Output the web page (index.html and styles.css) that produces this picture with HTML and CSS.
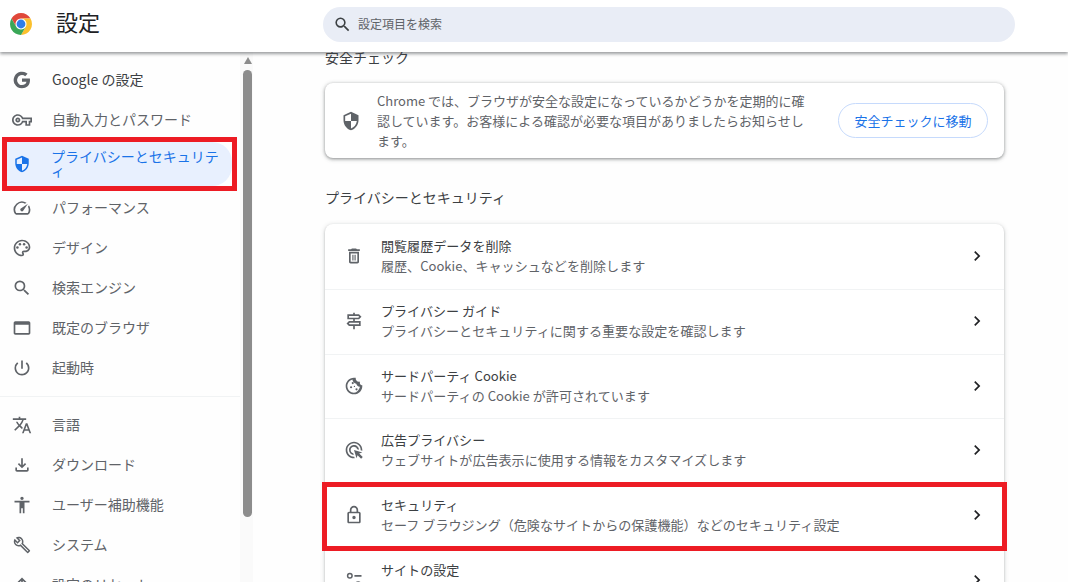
FILE: index.html
```html
<!DOCTYPE html>
<html lang="ja">
<head>
<meta charset="utf-8">
<title>設定</title>
<link rel="stylesheet" href="styles.css">
</head>
<body>
<div class="app">
  <header class="topbar">
    <div class="brand">
      <svg class="logo" viewBox="4 4 40 40"><path fill="#e0483a" d="M6.68 14A20 20 0 0 1 41.32 14H24A10 10 0 0 0 15.34 29Z"/><path fill="#fbc02d" d="M41.32 14A20 20 0 0 1 24 44L32.66 29A10 10 0 0 0 24 14Z"/><path fill="#3aa757" d="M24 44A20 20 0 0 1 6.68 14L15.34 29A10 10 0 0 0 32.66 29Z"/><circle cx="24" cy="24" r="8" fill="#2f7de8"/></svg>
      <h1 class="app-title">設定</h1>
    </div>
    <div class="search">
      <svg class="search-icon" viewBox="0 0 24 24"><path d="M15.5 14h-.79l-.28-.27A6.471 6.471 0 0 0 16 9.5 6.5 6.5 0 1 0 9.5 16c1.61 0 3.09-.59 4.23-1.57l.27.28v.79l5 4.99L20.49 19l-4.99-5zm-6 0C7.01 14 5 11.99 5 9.5S7.01 5 9.5 5 14 7.01 14 9.5 11.99 14 9.5 14z"/></svg>
      <span class="search-text">設定項目を検索</span>
    </div>
  </header>
  <div class="body">
    <nav class="sidebar">
      <ul class="nav-group">
        <li class="nav-item nav-strong"><svg class="nav-icon" viewBox="0 0 24 24"><path d="M21.6 12.2c0-.7-.1-1.4-.2-2H12v3.9h5.4a4.6 4.6 0 0 1-2 3v2.5h3.2c1.9-1.8 3-4.4 3-7.4z"/><path d="M12 22c2.7 0 5-.9 6.6-2.4l-3.2-2.5c-.9.6-2 1-3.4 1-2.6 0-4.8-1.8-5.6-4.1H3.1v2.6A10 10 0 0 0 12 22z"/><path d="M6.4 14a6 6 0 0 1 0-3.8V7.5H3.1a10 10 0 0 0 0 9z"/><path d="M12 6c1.5 0 2.8.5 3.8 1.5l2.9-2.9A10 10 0 0 0 3.1 7.5l3.3 2.6C7.2 7.8 9.4 6 12 6z"/></svg><span class="nav-label">Google の設定</span></li>
        <li class="nav-item"><svg class="nav-icon" viewBox="0 0 24 24"><path d="M22 19h-6v-4h-2.68c-1.14 2.42-3.6 4-6.32 4-3.86 0-7-3.14-7-7s3.14-7 7-7c2.72 0 5.17 1.58 6.32 4H24v6h-2v4zm-4-2h2v-4h2v-2H11.94l-.23-.67C11.01 8.34 9.11 7 7 7c-2.76 0-5 2.24-5 5s2.24 5 5 5c2.11 0 4.01-1.34 4.71-3.33l.23-.67H18v4zM7 15c-1.65 0-3-1.35-3-3s1.35-3 3-3 3 1.35 3 3-1.35 3-3 3zm0-4c-.55 0-1 .45-1 1s.45 1 1 1 1-.45 1-1-.45-1-1-1z"/></svg><span class="nav-label">自動入力とパスワード</span></li>
        <li class="nav-item nav-active"><svg class="nav-icon" viewBox="0 0 24 24"><path d="M12 1L3 5v6c0 5.55 3.84 10.74 9 12 5.16-1.26 9-6.45 9-12V5l-9-4zm0 10.99h7c-.53 4.12-3.28 7.79-7 8.94V12H5V6.3l7-3.11v8.8z"/></svg><span class="nav-label">プライバシーとセキュリティ</span></li>
        <li class="nav-item"><svg class="nav-icon" viewBox="0 0 24 24"><path d="M20.38 8.57l-1.23 1.85a8 8 0 0 1-.22 7.58H5.07A8 8 0 0 1 15.58 6.85l1.85-1.23A10 10 0 0 0 3.35 19a2 2 0 0 0 1.72 1h13.85a2 2 0 0 0 1.74-1 10 10 0 0 0-.27-10.44zm-9.79 6.84a2 2 0 0 0 2.83 0l5.66-8.49-8.49 5.66a2 2 0 0 0 0 2.83z"/></svg><span class="nav-label">パフォーマンス</span></li>
        <li class="nav-item"><svg class="nav-icon" viewBox="0 0 24 24"><path d="M12 22C6.49 22 2 17.51 2 12S6.49 2 12 2s10 4.04 10 9c0 3.31-2.69 6-6 6h-1.77c-.28 0-.5.22-.5.5 0 .12.05.23.13.33.41.47.64 1.06.64 1.67A2.5 2.5 0 0 1 12 22zm0-18c-4.41 0-8 3.59-8 8s3.59 8 8 8c.28 0 .5-.22.5-.5a.54.54 0 0 0-.14-.35c-.41-.46-.63-1.05-.63-1.65a2.5 2.5 0 0 1 2.5-2.5H16c2.21 0 4-1.79 4-4 0-3.86-3.59-7-8-7z"/><circle cx="6.5" cy="11.5" r="1.5"/><circle cx="9.5" cy="7.5" r="1.5"/><circle cx="14.5" cy="7.5" r="1.5"/><circle cx="17.5" cy="11.5" r="1.5"/></svg><span class="nav-label">デザイン</span></li>
        <li class="nav-item"><svg class="nav-icon" viewBox="0 0 24 24"><path d="M15.5 14h-.79l-.28-.27A6.471 6.471 0 0 0 16 9.5 6.5 6.5 0 1 0 9.5 16c1.61 0 3.09-.59 4.23-1.57l.27.28v.79l5 4.99L20.49 19l-4.99-5zm-6 0C7.01 14 5 11.99 5 9.5S7.01 5 9.5 5 14 7.01 14 9.5 11.99 14 9.5 14z"/></svg><span class="nav-label">検索エンジン</span></li>
        <li class="nav-item"><svg class="nav-icon" viewBox="0 0 24 24"><path d="M20 4H4c-1.1 0-2 .9-2 2v12c0 1.1.9 2 2 2h16c1.1 0 2-.9 2-2V6c0-1.1-.9-2-2-2zm0 14H4V8h16v10z"/></svg><span class="nav-label">既定のブラウザ</span></li>
        <li class="nav-item"><svg class="nav-icon" viewBox="0 0 24 24"><path d="M13 3h-2v10h2V3zm4.83 2.17l-1.42 1.42A6.92 6.92 0 0 1 19 12c0 3.87-3.13 7-7 7A6.995 6.995 0 0 1 7.58 6.58L6.17 5.17A8.932 8.932 0 0 0 3 12c0 4.97 4.03 9 9 9s9-4.03 9-9c0-2.74-1.23-5.18-3.17-6.83z"/></svg><span class="nav-label">起動時</span></li>
      </ul>
      <ul class="nav-group nav-group-rest">
        <li class="nav-item"><svg class="nav-icon" viewBox="0 0 24 24"><path d="M12.87 15.07l-2.54-2.51.03-.03A17.52 17.52 0 0 0 14.07 6H17V4h-7V2H8v2H1v1.99h11.17C11.5 7.92 10.44 9.75 9 11.35 8.07 10.32 7.3 9.19 6.69 8h-2c.73 1.63 1.73 3.17 2.98 4.56l-5.09 5.02L4 19l5-5 3.11 3.11.76-2.04zM18.5 10h-2L12 22h2l1.12-3h4.75L21 22h2l-4.5-12zm-2.62 7l1.62-4.33L19.12 17h-3.24z"/></svg><span class="nav-label">言語</span></li>
        <li class="nav-item"><svg class="nav-icon" viewBox="0 0 24 24"><path d="M18 15v3H6v-3H4v3c0 1.1.9 2 2 2h12c1.1 0 2-.9 2-2v-3h-2zm-1-4l-1.41-1.41L13 12.17V4h-2v8.17L8.41 9.59 7 11l5 5 5-5z"/></svg><span class="nav-label">ダウンロード</span></li>
        <li class="nav-item"><svg class="nav-icon" viewBox="0 0 24 24"><path d="M12 2c1.1 0 2 .9 2 2s-.9 2-2 2-2-.9-2-2 .9-2 2-2zm9 7h-6v13h-2v-6h-2v6H9V9H3V7h18v2z"/></svg><span class="nav-label">ユーザー補助機能</span></li>
        <li class="nav-item"><svg class="nav-icon nav-icon-small" viewBox="0 0 24 24"><path d="M22.61 18.99l-9.08-9.08c.93-2.34.45-5.1-1.44-7C9.79.61 6.21.4 3.66 2.25L7.5 6.1 6.08 7.51 2.25 3.69C.39 6.23.61 9.82 2.9 12.11c1.86 1.86 4.57 2.35 6.89 1.48l9.11 9.11c.39.39 1.02.39 1.41 0l2.3-2.3c.4-.38.4-1.02 0-1.41zm-3 1.6l-9.46-9.46c-.61.45-1.29.72-2 .82-1.36.2-2.79-.21-3.83-1.25C3.37 9.76 2.93 8.5 3 7.26l3.09 3.09 4.24-4.24-3.09-3.09c1.24-.07 2.49.37 3.44 1.31a4.469 4.469 0 0 1 1.24 3.96 4.35 4.35 0 0 1-.88 1.96l9.45 9.45-.88.89z"/></svg><span class="nav-label">システム</span></li>
        <li class="nav-item"><svg class="nav-icon" viewBox="0 0 24 24"><path d="M12 3l-6 6 1.4 1.4L11 6.8V15h2V6.8l3.6 3.6L18 9z"/></svg><span class="nav-label">設定のリセット</span></li>
      </ul>
    </nav>
    <div class="scrollbar">
      <div class="scroll-arrow"></div>
      <div class="scroll-thumb"></div>
    </div>
    <main class="main">
      <h2 class="section-title section-first">安全チェック</h2>
      <section class="card check-card">
        <svg class="row-icon" viewBox="0 0 24 24"><path d="M12 1L3 5v6c0 5.55 3.84 10.74 9 12 5.16-1.26 9-6.45 9-12V5l-9-4zm0 10.99h7c-.53 4.12-3.28 7.79-7 8.94V12H5V6.3l7-3.11v8.8z"/></svg>
        <p class="check-text">Chrome では、ブラウザが安全な設定になっているかどうかを定期的に確認しています。お客様による確認が必要な項目がありましたらお知らせします。</p>
        <button class="check-button">安全チェックに移動</button>
      </section>
      <h2 class="section-title">プライバシーとセキュリティ</h2>
      <section class="card list-card">
        <div class="row">
          <svg class="row-icon" viewBox="0 0 24 24"><path d="M16 9v10H8V9h8m-1.5-6h-5l-1 1H5v2h14V4h-3.5l-1-1zM18 7H6v12c0 1.1.9 2 2 2h8c1.1 0 2-.9 2-2V7z"/><path d="M10 10.500h1.400v7H10zM12.600 10.500H14v7h-1.400z"/></svg>
          <div class="row-text"><div class="row-label">閲覧履歴データを削除</div><div class="row-sub">履歴、Cookie、キャッシュなどを削除します</div></div>
          <svg class="chevron" viewBox="0 0 24 24"><path d="M10 6L8.59 7.41 13.17 12l-4.58 4.59L10 18l6-6z"/></svg>
        </div>
        <div class="row">
          <svg class="row-icon" viewBox="0 0 24 24"><path d="M13 10h5l3-3-3-3h-5V2h-2v2H4v6h7v2H6l-3 3 3 3h5v4h2v-4h7v-6h-7v-2zM6 6h11.170l1 1-1 1H6V6zm12 10H6.830l-1-1 1-1H18v2z"/></svg>
          <div class="row-text"><div class="row-label">プライバシー ガイド</div><div class="row-sub">プライバシーとセキュリティに関する重要な設定を確認します</div></div>
          <svg class="chevron" viewBox="0 0 24 24"><path d="M10 6L8.59 7.41 13.17 12l-4.58 4.59L10 18l6-6z"/></svg>
        </div>
        <div class="row">
          <svg class="row-icon" viewBox="0 0 24 24"><path d="M21.950 10.990c-1.790-.03-3.700-1.950-2.680-4.220-2.970 1-5.780-1.590-5.190-4.560C7.110.74 2 6.410 2 12c0 5.520 4.480 10 10 10 5.890 0 10.540-5.080 9.950-11.010zM12 20c-4.410 0-8-3.590-8-8 0-3.310 2.310-6.830 6.130-7.770.21 2.490 2.130 4.670 4.640 4.980.2 1.680 1.850 3.580 4.290 3.660C18.530 16.100 15.500 20 12 20z"/><circle cx="10.500" cy="8.500" r="1.300"/><circle cx="8.500" cy="13.500" r="1.300"/><circle cx="15" cy="16" r="1.300"/><circle cx="12.500" cy="12.500" r=".8"/></svg>
          <div class="row-text"><div class="row-label">サードパーティ Cookie</div><div class="row-sub">サードパーティの Cookie が許可されています</div></div>
          <svg class="chevron" viewBox="0 0 24 24"><path d="M10 6L8.59 7.41 13.17 12l-4.58 4.59L10 18l6-6z"/></svg>
        </div>
        <div class="row">
          <svg class="row-icon" viewBox="0 0 24 24"><path d="M11.71 17.99A5.993 5.993 0 0 1 6 12c0-3.31 2.69-6 6-6 3.22 0 5.84 2.53 5.99 5.71l-2.1-.63a3.999 3.999 0 1 0-4.81 4.81l.63 2.1zM22 12c0 .3-.01.6-.04.9l-1.97-.59c.01-.1.01-.21.01-.31 0-4.42-3.58-8-8-8s-8 3.58-8 8 3.58 8 8 8c.1 0 .21 0 .31-.01l.59 1.97c-.3.03-.6.04-.9.04-5.52 0-10-4.48-10-10S6.48 2 12 2s10 4.48 10 10zm-3.77 4.26L22 15l-10-3 3 10 1.26-3.77 4.27 4.27 1.98-1.98-4.28-4.26z"/></svg>
          <div class="row-text"><div class="row-label">広告プライバシー</div><div class="row-sub">ウェブサイトが広告表示に使用する情報をカスタマイズします</div></div>
          <svg class="chevron" viewBox="0 0 24 24"><path d="M10 6L8.59 7.41 13.17 12l-4.58 4.59L10 18l6-6z"/></svg>
        </div>
        <div class="row row-marked">
          <svg class="row-icon" viewBox="0 0 24 24"><path d="M18 8h-1V6c0-2.76-2.24-5-5-5S7 3.240 7 6v2H6c-1.100 0-2 .9-2 2v10c0 1.100.9 2 2 2h12c1.100 0 2-.9 2-2V10c0-1.100-.9-2-2-2zM9 6c0-1.660 1.340-3 3-3s3 1.340 3 3v2H9V6zm9 14H6V10h12v10zm-6-3c1.100 0 2-.9 2-2s-.9-2-2-2-2 .9-2 2 .9 2 2 2z"/></svg>
          <div class="row-text"><div class="row-label">セキュリティ</div><div class="row-sub">セーフ ブラウジング（危険なサイトからの保護機能）などのセキュリティ設定</div></div>
          <svg class="chevron" viewBox="0 0 24 24"><path d="M10 6L8.59 7.41 13.17 12l-4.58 4.59L10 18l6-6z"/></svg>
        </div>
        <div class="row">
          <svg class="row-icon" viewBox="0 0 24 24"><circle cx="7" cy="7" r="2.700" fill="none" stroke="currentColor" stroke-width="1.800"/><circle cx="17" cy="17" r="2.700" fill="none" stroke="currentColor" stroke-width="1.800"/><path d="M12.500 6h8.500v2h-8.500zM3 16h8.500v2H3z"/></svg>
          <div class="row-text"><div class="row-label">サイトの設定</div><div class="row-sub">サイトが使用、表示できる情報を管理します</div></div>
          <svg class="chevron" viewBox="0 0 24 24"><path d="M10 6L8.59 7.41 13.17 12l-4.58 4.59L10 18l6-6z"/></svg>
        </div>
      </section>
    </main>
  </div>
</div>
</body>
</html>
```
FILE: styles.css
```css
* { box-sizing: border-box; }
html, body { margin: 0; height: 100%; overflow: hidden; background: #fefefe; }
body { font-family: "Noto Sans CJK JP", Roboto, "Noto Sans", sans-serif; color: #3c4043; font-weight: 400; }
ul { list-style: none; margin: 0; padding: 0; }
.app { display: flex; flex-direction: column; height: 582px; overflow: hidden; }

.topbar { display: flex; align-items: flex-start; height: 52px; background: #fff; box-shadow: 0 2px 3px rgba(60, 64, 67, .5); position: relative; z-index: 2; flex: none; }
.brand { display: flex; align-items: center; width: 323px; height: 47px; padding-left: 10px; }
.logo { width: 22px; height: 22px; flex: none; }
.app-title { margin: 0 0 5px 24px; font-size: 22px; font-weight: 400; color: #202124; line-height: 30px; }
.search { display: flex; align-items: center; width: 692px; height: 35px; margin-top: 7px; padding: 0 0 1px 10px; border-radius: 18px; background: #e9edf6; }
.search-icon { width: 19px; height: 19px; fill: #3c4043; flex: none; }
.search-text { margin: 0 0 1px 6px; font-size: 12px; color: #5f6368; }

.body { display: flex; flex: 1; min-height: 0; }
.sidebar { width: 240px; flex: none; padding-top: 8px; overflow: hidden; }
.nav-group-rest { margin-top: 8px; padding-top: 8px; border-top: 1px solid #f1f3f4; }
.nav-item { display: flex; align-items: center; min-height: 40px; padding-left: 12px; font-size: 14px; line-height: 14px; color: #5f6368; }
.nav-label { margin-bottom: 2px; }
.nav-strong { color: #3c4043; }
.nav-icon { width: 20px; height: 20px; margin-right: 20px; fill: #5f6368; flex: none; }
.nav-icon-small { width: 18px; height: 18px; margin: 0 21px 0 1px; }
.nav-active { position: relative; height: 44px; margin: 2px 8px 2px 6px; padding: 0 12px 0 6px; border-radius: 0 20px 20px 0; background: #e8f0fe; color: #1a73e8; }
.nav-active .nav-icon { fill: #1a73e8; width: 18px; height: 18px; margin: 0 20px 0 1px; }
.nav-active::after { content: ""; position: absolute; inset: -5px -5px -5px -4px; border: 5px solid #ed1c24; }

.scrollbar { width: 13px; flex: none; background: #fafafa; position: relative; padding: 5px 1px 0 3px; }
.scroll-arrow { width: 0; height: 0; margin: 0 auto; border-left: 4.500px solid transparent; border-right: 4.500px solid transparent; border-bottom: 7px solid #8c8c8c; }
.scroll-thumb { width: 9px; height: 447px; margin-top: 6px; border-radius: 5px; background: #8c8c8c; }

.main { flex: 1; padding: 0 64px 0 72px; min-width: 0; }
.section-title { margin: 30px 0 16px; height: 20px; font-size: 14px; font-weight: 400; line-height: 18px; color: #3c4043; }
.section-first { margin-top: -4px; margin-bottom: 15px; }
.card { background: #fff; border-radius: 8px; box-shadow: 0 1px 2px rgba(60, 64, 67, .3), 0 1px 4px 1px rgba(60, 64, 67, .15); }
.check-card { display: flex; align-items: center; height: 75px; padding: 0 16px 0 16px; box-shadow: 0 1px 3px rgba(60, 64, 67, .45), 0 1px 4px 1px rgba(60, 64, 67, .18); }
.check-card .row-icon { margin-right: 16px; }
.check-text { width: 436px; margin: 0; font-size: 13px; line-height: 20px; color: #5f6368; }
.check-button { margin-left: 25px; width: 150px; height: 35px; padding: 0; border: 1px solid #c6dafc; border-radius: 18px; background: #fff; font-family: inherit; font-size: 13px; color: #1a73e8; }

.row { display: flex; align-items: center; height: 64.800px; padding: 0 17px 1.600px 19px; border-top: 1px solid #f1f3f4; position: relative; }
.row:first-child { border-top: 0; }
.row-icon { width: 20px; height: 20px; fill: #5f6368; color: #5f6368; flex: none; }
.row-text { flex: 1; margin-left: 17px; min-width: 0; }
.row-label { font-size: 13.070px; line-height: 20px; color: #3c4043; }
.row-sub { font-size: 13.070px; line-height: 20px; color: #5f6368; }
.chevron { width: 20px; height: 20px; fill: #202124; flex: none; }
.row-marked { z-index: 1; }
.row-marked::after { content: ""; position: absolute; inset: -2px -3px -3px -3px; border: 5px solid #ed1c24; }
```
